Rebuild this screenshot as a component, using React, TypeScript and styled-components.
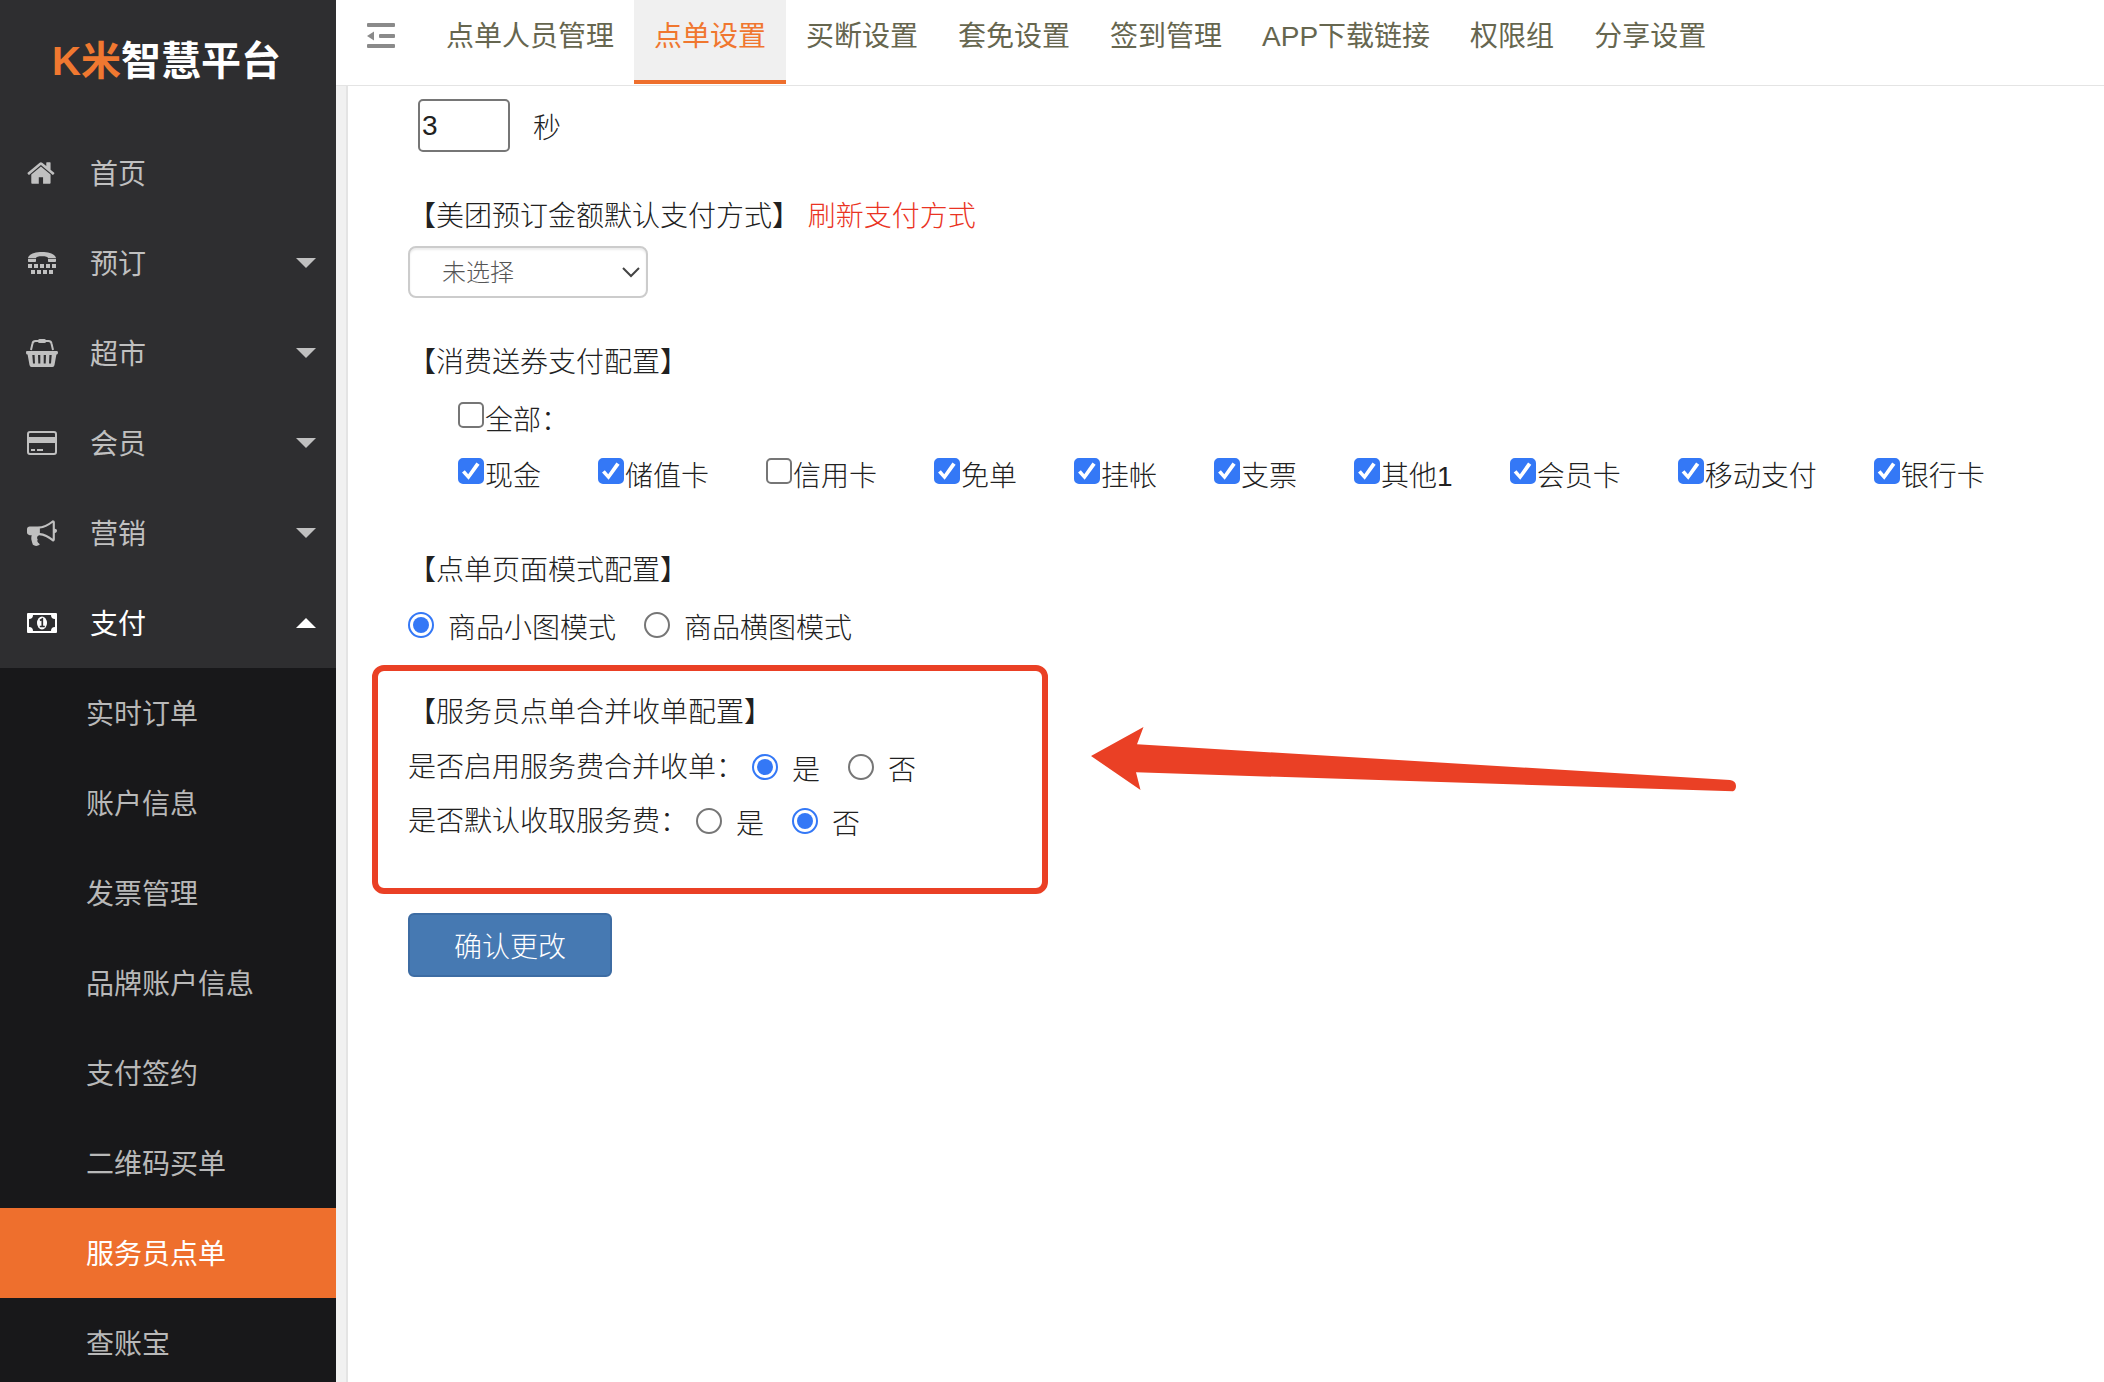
import React, { useState } from "react";
import styled, { createGlobalStyle } from "styled-components";

const sans = `"Liberation Sans", "Noto Sans CJK SC", sans-serif`;

const GlobalStyle = createGlobalStyle`
  *, *::before, *::after { box-sizing: border-box; }
  html, body { margin: 0; height: 100%; overflow: hidden; }
  body { font-family: ${sans}; font-size: 28px; color: #212121; background: #fff; }
  button, input, select { font: inherit; color: inherit; margin: 0; }
  a { text-decoration: none; color: inherit; }
`;

const Shell = styled.div`
  display: grid;
  grid-template-columns: 336px 1fr;
  height: 100vh;
  overflow: hidden;
`;

/* ---------- sidebar ---------- */

const Sidebar = styled.aside`
  background: #2e2e30;
  overflow: hidden;
`;

const Logo = styled.a`
  display: flex;
  align-items: center;
  height: 128px;
  padding: 0 0 6px 52px;
  font-size: 40px;
  font-weight: 700;
  line-height: 40px;
  white-space: nowrap;
  color: #fff;
`;

const LogoMark = styled.span`
  color: #f07830;
`;

const Menu = styled.ul`
  list-style: none;
  margin: 0;
  padding: 0;
`;

const MenuButton = styled.button<{ $open?: boolean }>`
  display: flex;
  align-items: center;
  gap: 32px;
  width: 100%;
  height: 90px;
  padding: 0 20px 0 26px;
  border: 0;
  background: none;
  text-align: left;
  color: ${(p) => (p.$open ? "#fff" : "#c0c0c0")};
  cursor: pointer;
`;

const IconSlot = styled.span`
  display: flex;
  justify-content: center;
  width: 32px;
`;

const MenuLabel = styled.span`
  flex: 1;
  padding-bottom: 2px;
`;

const Caret = styled.span<{ $up?: boolean }>`
  width: 20px;
  height: 10px;
  background: currentColor;
  clip-path: ${(p) =>
    p.$up ? "polygon(50% 0, 100% 100%, 0 100%)" : "polygon(0 0, 100% 0, 50% 100%)"};
`;

const SubMenu = styled(Menu)`
  background: #18181a;
`;

const SubLink = styled.a<{ $active?: boolean }>`
  display: flex;
  align-items: center;
  height: 90px;
  padding: 0 0 2px 86px;
  color: ${(p) => (p.$active ? "#fff" : "#b8b8b8")};
  background: ${(p) => (p.$active ? "#ee6f2d" : "transparent")};
`;

/* ---------- top bar ---------- */

const Main = styled.div`
  display: flex;
  flex-direction: column;
  min-width: 0;
`;

const TopBar = styled.header`
  display: flex;
  flex: none;
  height: 86px;
  padding-left: 30px;
  border-bottom: 1px solid #e4e4e4;
`;

const CollapseButton = styled.button`
  display: flex;
  align-items: center;
  width: 30px;
  height: 72px;
  margin-right: 30px;
  padding: 0;
  border: 0;
  background: none;
  color: #8a8a8a;
  cursor: pointer;
`;

const Tabs = styled.nav`
  display: flex;
`;

const Tab = styled.a<{ $active?: boolean }>`
  height: 84px;
  padding: 0 20px;
  line-height: 74px;
  white-space: nowrap;
  color: ${(p) => (p.$active ? "#f0772f" : "#66664f")};
  background: ${(p) => (p.$active ? "#f0f0f0" : "transparent")};
  border-bottom: 4px solid ${(p) => (p.$active ? "#ee6f2d" : "transparent")};
`;

/* ---------- settings form ---------- */

const Stage = styled.main`
  flex: 1;
  min-height: 0;
  padding-left: 10px;
  background: #f1f1f1;
`;

const Form = styled.form`
  height: 100%;
  padding: 13px 0 0 60px;
  border-left: 2px solid #e4e4e4;
  background: #fff;
`;

const Section = styled.section<{ $after: number }>`
  position: relative;
  margin-bottom: ${(p) => p.$after}px;
`;

const Title = styled.h2`
  margin: 0;
  font-size: 28px;
  font-weight: 300;
  line-height: 42px;
`;

const RefreshLink = styled.a`
  color: #ea3323;
`;

const SecondsRow = styled.label`
  display: flex;
  align-items: center;
  gap: 23px;
  padding-left: 10px;
  font-weight: 300;
`;

const SecondsInput = styled.input`
  width: 92px;
  height: 53px;
  padding: 0 2px;
  border: 2px solid #767676;
  border-radius: 5px;
  font-weight: 400;
  background: #fff;
`;

const SelectBox = styled.div`
  display: grid;
  width: 240px;
  margin-top: 8px;
  color: #555;

  > * { grid-area: 1 / 1; }
  > svg { align-self: center; justify-self: end; margin-right: 7px; pointer-events: none; }
`;

const PaySelect = styled.select`
  appearance: none;
  height: 52px;
  padding: 0 32px;
  border: 2px solid #ccc;
  border-radius: 8px;
  background: #fff;
  box-shadow: inset 0 2px 2px rgba(0, 0, 0, 0.08);
  font-size: 24px;
  font-weight: 300;
`;

const CheckRow = styled.div`
  display: flex;
  flex-wrap: wrap;
  gap: 18px 57px;
  padding-left: 50px;
  margin-top: 18px;
`;

const CheckLabel = styled.label`
  display: flex;
  align-items: flex-start;
  gap: 1px;
  font-weight: 300;
  line-height: 38px;
  white-space: nowrap;
`;

const Choice = styled.input`
  appearance: none;
  display: grid;
  place-items: center;
  flex: none;
  width: 26px;
  height: 26px;
  border: 2px solid #767676;
  background: #fff;
`;

const Checkbox = styled(Choice).attrs({ type: "checkbox" })`
  border-radius: 5px;

  &:checked {
    border-color: #3478f6;
    background: #3478f6;
  }
  &:checked::before {
    content: "";
    width: 20px;
    height: 20px;
    background: #fff;
    clip-path: polygon(5% 58%, 19% 46%, 36% 66%, 77% 8%, 93% 19%, 38% 94%);
  }
`;

const Radio = styled(Choice).attrs({ type: "radio" })`
  border-radius: 50%;

  &:checked {
    border-color: #3478f6;
  }
  &:checked::before {
    content: "";
    width: 16px;
    height: 16px;
    border-radius: 50%;
    background: #3478f6;
  }
`;

const RadioRow = styled.div`
  display: flex;
  align-items: flex-start;
  gap: 28px;
  margin-top: 20px;
  font-weight: 300;
`;

const RadioQuestion = styled.span`
  line-height: 28px;
  margin-right: -20px;
`;

const RadioLabel = styled.label`
  display: flex;
  align-items: flex-start;
  gap: 14px;
  line-height: 34px;
`;

const SubmitButton = styled.button`
  height: 64px;
  padding: 0 44px;
  border: 2px solid #3d6ca3;
  border-radius: 6px;
  background: #4679b2;
  color: #fff;
  font-weight: 300;
  cursor: pointer;
`;

const CalloutFrame = styled.div`
  position: absolute;
  top: -27px;
  left: -36px;
  width: 676px;
  height: 229px;
  border: 6px solid #ea4025;
  border-radius: 12px;
  pointer-events: none;
`;

const CalloutArrow = styled.svg`
  position: absolute;
  top: 35px;
  left: 682px;
  pointer-events: none;
`;

/* ---------- icons ---------- */

const HomeIcon = () => (
  <svg width="30" height="30" viewBox="0 0 1792 1792" fill="currentColor" aria-hidden="true">
    <path d="M1408 992v480q0 26-19 45t-45 19h-384v-384h-256v384h-384q-26 0-45-19t-19-45v-480q0-1 .5-3t.5-3l575-474 575 474q1 2 1 6zm223-69l-62 74q-8 9-21 11h-3q-13 0-21-7l-692-577-692 577q-12 8-24 7-13-2-21-11l-62-74q-8-10-7-23.5t11-21.5l719-599q32-26 76-26t76 26l244 204v-195q0-14 9-23t23-9h192q14 0 23 9t9 23v408l219 182q10 8 11 21.5t-7 23.5z" />
  </svg>
);

const PhoneIcon = () => (
  <svg width="28" height="22" viewBox="0 0 28 22" fill="currentColor" aria-hidden="true">
    <path d="M0 6C1 2 7 0 14 0s13 2 14 6v.3h-8c0-1.500-2.500-2-6-2s-6 .5-6 2H0z" />
    <path d="M0 7h8v2c0 .6-.4 1-1 1H1c-.6 0-1-.4-1-1zM20 7h8v2c0 .6-.4 1-1 1h-6c-.6 0-1-.4-1-1z" />
    {[0, 6, 12, 18, 24].map((x) => (
      <rect key={x} x={x} y="12" width="4" height="4" />
    ))}
    {[3, 9, 15, 21].map((x) => (
      <rect key={x} x={x} y="18" width="4" height="4" />
    ))}
  </svg>
);

const BasketIcon = () => (
  <svg width="32" height="28" viewBox="0 0 32 28" fill="currentColor" aria-hidden="true">
    <path d="M5 11L6.500 4.500Q7 2 9.500 2h13Q25 2 25.500 4.500L27 11" fill="none" stroke="currentColor" strokeWidth="2" />
    <rect x="12" y="0" width="8" height="4" rx="1.500" />
    <path
      fillRule="evenodd"
      d="M1 12h30q1 0 1 1.500T31 15.500h-.6L28.500 26q-.3 2-2 2h-21q-1.700 0-2-2L1.600 15.500H1q-1 0-1-2T1 12zM6.300 16l.7 8.500h2L8.600 16zM12 16l.3 8.500h2V16zM17.700 16v8.500h2L20 16zM23.400 16l-.4 8.500h2l.7-8.500z"
    />
  </svg>
);

const CardIcon = () => (
  <svg width="30" height="24" viewBox="0 0 30 24" fill="currentColor" aria-hidden="true">
    <rect x="1" y="1" width="28" height="22" rx="2" fill="none" stroke="currentColor" strokeWidth="2" />
    <rect x="1" y="6" width="28" height="6" />
    <rect x="4" y="18" width="4" height="2" />
    <rect x="10" y="18" width="6" height="2" />
  </svg>
);

const HornIcon = () => (
  <svg width="30" height="30" viewBox="0 0 1792 1792" fill="currentColor" aria-hidden="true">
    <path d="M1664 640q53 0 90.5 37.500t37.500 90.500-37.500 90.500-90.500 37.500v384q0 52-38 90t-90 38q-417-347-812-380-58 19-91 66t-31 100.500 40 92.500q-20 33-23 65.500t6 58 33.500 55 48 50 61.500 50.500q-29 58-111.500 83t-168.500 11.500-132-55.500q-7-23-29.500-87.500t-32-94.500-23-89-15-101 3.500-98.500 22-110.500h-122q-66 0-113-47t-47-113v-192q0-66 47-113t113-47h480q435 0 896-384 52 0 90 38t38 90v384zm-128 604v-954q-394 302-768 343v270q377 42 768 341z" />
  </svg>
);

const MoneyIcon = () => (
  <svg width="30" height="20" viewBox="0 0 30 20" fill="currentColor" aria-hidden="true">
    <path
      fillRule="evenodd"
      d="M1 0h28q1 0 1 1v18q0 1-1 1H1q-1 0-1-1V1q0-1 1-1zM6 2Q6 6 2 6v8q4 0 4 4h18q0-4 4-4V6q-4 0-4-4z"
    />
    <ellipse cx="15" cy="10" rx="5" ry="6.500" />
    <path d="M13 7.500L15.300 6v7M12.800 13.500h5" fill="none" stroke="#2e2e30" strokeWidth="1.700" />
  </svg>
);

const CollapseIcon = () => (
  <svg width="30" height="26" viewBox="0 0 30 26" fill="currentColor" aria-hidden="true">
    <rect x="1" y="0" width="28" height="4" rx="1" />
    <rect x="13" y="11" width="16" height="4" rx="1" />
    <rect x="1" y="21" width="28" height="4" rx="1" />
    <path d="M1 13l7-4.500v9z" />
  </svg>
);

/* ---------- data ---------- */

const menu = [
  { label: "首页", icon: <HomeIcon />, plain: true },
  { label: "预订", icon: <PhoneIcon /> },
  { label: "超市", icon: <BasketIcon /> },
  { label: "会员", icon: <CardIcon /> },
  { label: "营销", icon: <HornIcon /> },
  {
    label: "支付",
    icon: <MoneyIcon />,
    children: [
      "实时订单",
      "账户信息",
      "发票管理",
      "品牌账户信息",
      "支付签约",
      "二维码买单",
      "服务员点单",
      "查账宝",
    ],
  },
];

const tabs = [
  "点单人员管理",
  "点单设置",
  "买断设置",
  "套免设置",
  "签到管理",
  "APP下载链接",
  "权限组",
  "分享设置",
];

const payments = [
  { name: "现金", on: true },
  { name: "储值卡", on: true },
  { name: "信用卡", on: false },
  { name: "免单", on: true },
  { name: "挂帐", on: true },
  { name: "支票", on: true },
  { name: "其他1", on: true },
  { name: "会员卡", on: true },
  { name: "移动支付", on: true },
  { name: "银行卡", on: true },
];

/* ---------- composed parts ---------- */

type RadioGroupProps = {
  name: string;
  options: string[];
  initial: string;
  question?: string;
};

function RadioGroup({ name, options, initial, question }: RadioGroupProps) {
  return (
    <RadioRow role="radiogroup" aria-labelledby={`${name}-title`}>
      {question && <RadioQuestion id={`${name}-title`}>{question}</RadioQuestion>}
      {options.map((option) => (
        <RadioLabel key={option}>
          <Radio name={name} value={option} defaultChecked={option === initial} />
          {option}
        </RadioLabel>
      ))}
    </RadioRow>
  );
}

export default function App() {
  const [open, setOpen] = useState("支付");

  return (
    <>
      <GlobalStyle />
      <Shell>
        <Sidebar>
          <Logo href="#home">
            <LogoMark>K米</LogoMark>智慧平台
          </Logo>
          <Menu>
            {menu.map((item) => {
              const expanded = open === item.label;
              return (
                <li key={item.label}>
                  <MenuButton
                    type="button"
                    $open={expanded}
                    aria-expanded={item.plain ? undefined : expanded}
                    onClick={() => setOpen(expanded ? "" : item.label)}
                  >
                    <IconSlot>{item.icon}</IconSlot>
                    <MenuLabel>{item.label}</MenuLabel>
                    {!item.plain && <Caret $up={expanded} />}
                  </MenuButton>
                  {expanded && item.children && (
                    <SubMenu>
                      {item.children.map((child) => (
                        <li key={child}>
                          <SubLink href="#page" $active={child === "服务员点单"}>
                            {child}
                          </SubLink>
                        </li>
                      ))}
                    </SubMenu>
                  )}
                </li>
              );
            })}
          </Menu>
        </Sidebar>

        <Main>
          <TopBar>
            <CollapseButton type="button" aria-label="收起菜单">
              <CollapseIcon />
            </CollapseButton>
            <Tabs>
              {tabs.map((tab) => (
                <Tab key={tab} href="#tab" $active={tab === "点单设置"}>
                  {tab}
                </Tab>
              ))}
            </Tabs>
          </TopBar>

          <Stage>
            <Form onSubmit={(e) => e.preventDefault()}>
              <Section $after={44}>
                <SecondsRow>
                  <SecondsInput type="text" defaultValue="3" />秒
                </SecondsRow>
              </Section>

              <Section $after={44}>
                <Title>
                  <label htmlFor="meituan-pay">【美团预订金额默认支付方式】</label>{" "}
                  <RefreshLink href="#refresh">刷新支付方式</RefreshLink>
                </Title>
                <SelectBox>
                  <PaySelect id="meituan-pay" defaultValue="none">
                    <option value="none">未选择</option>
                  </PaySelect>
                  <svg width="20" height="12" viewBox="0 0 20 12" fill="none" stroke="#444" strokeWidth="2" aria-hidden="true">
                    <path d="M2 2l8 8 8-8" />
                  </svg>
                </SelectBox>
              </Section>

              <Section $after={54}>
                <Title>【消费送券支付配置】</Title>
                <CheckRow>
                  <CheckLabel>
                    <Checkbox />
                    全部：
                  </CheckLabel>
                </CheckRow>
                <CheckRow>
                  {payments.map((p) => (
                    <CheckLabel key={p.name}>
                      <Checkbox defaultChecked={p.on} />
                      {p.name}
                    </CheckLabel>
                  ))}
                </CheckRow>
              </Section>

              <Section $after={46}>
                <Title id="mode-title">【点单页面模式配置】</Title>
                <RadioGroup
                  name="mode"
                  options={["商品小图模式", "商品横图模式"]}
                  initial="商品小图模式"
                />
              </Section>

              <Section $after={71}>
                <Title>【服务员点单合并收单配置】</Title>
                <RadioGroup
                  name="merge"
                  question="是否启用服务费合并收单："
                  options={["是", "否"]}
                  initial="是"
                />
                <RadioGroup
                  name="fee"
                  question="是否默认收取服务费："
                  options={["是", "否"]}
                  initial="否"
                />
                <CalloutFrame />
                <CalloutArrow width="648" height="66" viewBox="0 0 648 66" fill="#ea4025" aria-hidden="true">
                  <path d="M1 29L53.500 0 47 17.300 640 53Q646 54 646 59 646 63 643 64.300L46 45.300 50.500 63z" />
                </CalloutArrow>
              </Section>

              <SubmitButton type="submit">确认更改</SubmitButton>
            </Form>
          </Stage>
        </Main>
      </Shell>
    </>
  );
}
